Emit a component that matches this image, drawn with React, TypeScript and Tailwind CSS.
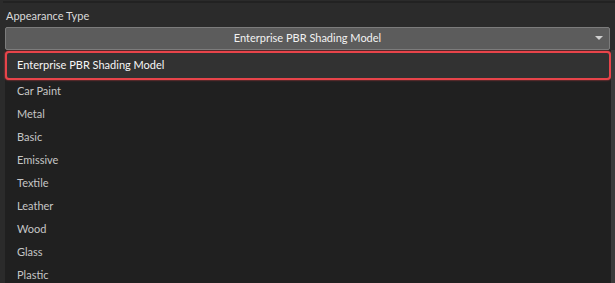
const items = ['Car Paint', 'Metal', 'Basic', 'Emissive', 'Textile', 'Leather', 'Wood', 'Glass', 'Plastic'];

export default function App() {
  return (
    <div
      className="w-[615px] h-[283px] overflow-hidden bg-[#2b2b2b] flex flex-col text-[11px]"
      style={{ fontFamily: 'Lato, "Noto Sans", sans-serif' }}
    >
      <div className="h-[2px] ml-[3px] mt-px bg-[#222222] shrink-0" />
      <div className="h-[24px] pl-[6px] pt-[4px] leading-[18px] text-[#dadada] shrink-0">Appearance Type</div>
      <div className="mx-[5px] h-[23px] shrink-0 flex items-center relative bg-[#5c5c5c] border border-[#7c7c7c] rounded-[2px]">
        <span className="flex-1 text-center text-[#f2f2f2]">Enterprise PBR Shading Model</span>
        <svg className="absolute right-[6px] top-[8px]" width="8" height="5" viewBox="0 0 8 5">
          <path d="M0 0 H8 L4 4 Z" fill="#d0d0d0" />
        </svg>
      </div>
      <div className="flex flex-1 min-h-0">
        <div className="ml-[5px] flex-1 bg-[#202020] pt-px">
          <div className="h-[29px] flex items-center pl-[10px] bg-[#323232] border-2 border-[#e8444a] rounded-[4px] text-[#f6f6f6] shadow-[0_0_2px_#e8444a]">
            Enterprise PBR Shading Model
          </div>
          {items.map((it) => (
            <div key={it} className="h-[23px] flex items-center pl-[12px] text-[#c6c6c6]">
              {it}
            </div>
          ))}
        </div>
        <div className="w-[4px] bg-[#3a3a3a]" />
      </div>
    </div>
  );
}
